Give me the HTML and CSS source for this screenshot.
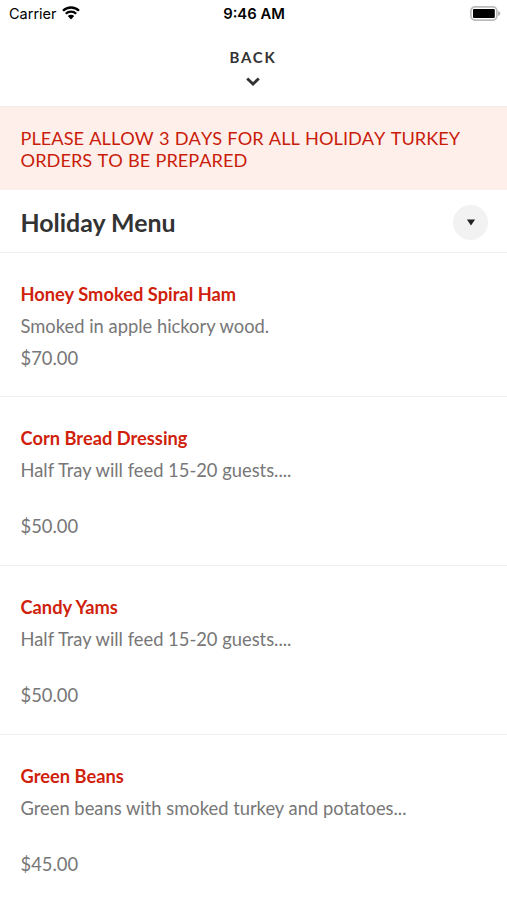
FILE: index.html
```html
<!DOCTYPE html>
<html lang="en">

<head>
  <meta charset="UTF-8">
  <meta name="viewport" content="width=device-width, initial-scale=1.0">
  <title>Holiday Menu</title>
  <link rel="stylesheet" href="styles.css">
</head>

<body>
  <div class="status">
    <div class="status__carrier">
      <span>Carrier</span>
      <svg class="status__wifi" width="18" height="14" viewBox="0 0 18 14">
        <path d="M1 4.8a11.4 11.4 0 0 1 16 0M3.8 7.8a7.4 7.4 0 0 1 10.4 0" fill="none" stroke="#000" stroke-width="2.3"/>
        <path d="M5.8 10.1a4.6 4.6 0 0 1 6.4 0L9 13.4z"/>
      </svg>
    </div>
    <div class="status__time">9:46 AM</div>
    <svg class="status__battery" width="31" height="15" viewBox="0 0 31 15">
      <rect x="0.9" y="0.9" width="26" height="13.2" rx="4" fill="none" stroke="#bcbcbc" stroke-width="1.7"/>
      <rect x="3" y="3" width="21.800" height="9" rx="1"/>
      <path d="M28 5v5a3 3 0 0 0 2.400-2.500a3 3 0 0 0-2.400-2.500z" fill="#b5b5b5"/>
    </svg>
  </div>

  <header class="header">
    <button class="header__back">BACK</button>
    <svg class="header__arrow" width="14" height="9" viewBox="0 0 14 9">
      <path d="M1.2 1.5L7 7l5.800-5.500" fill="none" stroke="#333" stroke-width="2.900"/>
    </svg>
  </header>

  <p class="notice">PLEASE ALLOW 3 DAYS FOR ALL HOLIDAY TURKEY ORDERS TO BE PREPARED</p>

  <div class="category">
    <h1 class="category__title">Holiday Menu</h1>
    <button class="category__toggle">
      <svg width="10" height="7" viewBox="0 0 10 7"><path d="M0.900 0.500h8.200L5 6.500z" fill="#222"/></svg>
    </button>
  </div>

  <ul class="menu">
    <li class="menu__item menu__item--short">
      <h2 class="menu__name">Honey Smoked Spiral Ham</h2>
      <p class="menu__text">Smoked in apple hickory wood.</p>
      <p class="menu__price">$70.00</p>
    </li>
    <li class="menu__item">
      <h2 class="menu__name">Corn Bread Dressing</h2>
      <p class="menu__text">Half Tray will feed 15-20 guests....</p>
      <p class="menu__price">$50.00</p>
    </li>
    <li class="menu__item">
      <h2 class="menu__name">Candy Yams</h2>
      <p class="menu__text">Half Tray will feed 15-20 guests....</p>
      <p class="menu__price">$50.00</p>
    </li>
    <li class="menu__item">
      <h2 class="menu__name">Green Beans</h2>
      <p class="menu__text">Green beans with smoked turkey and potatoes...</p>
      <p class="menu__price">$45.00</p>
    </li>
  </ul>
</body>

</html>
```

FILE: styles.css
```css
* {
  box-sizing: border-box;
}

body {
  margin: 0;
  height: 900px;
  overflow: hidden;
  background-color: #fff;
  color: #333;
  font-family: Lato, sans-serif;
}

h1, h2, p, ul {
  margin: 0;
  padding: 0;
}

button {
  padding: 0;
  border: 0;
  background: none;
  font-family: inherit;
  color: inherit;
}

.status {
  display: grid;
  grid-template-columns: 1fr auto 1fr;
  align-items: center;
  height: 27px;
  padding: 0 6px 0 9px;
  color: #000;
  font-family: Inter, sans-serif;
  font-size: 14.5px;
}

.status__carrier {
  display: flex;
  align-items: center;
  gap: 5px;
}

.status__wifi {
  margin-top: -1px;
}

.status__time {
  margin-right: 2px;
  font-size: 14.8px;
  font-weight: 600;
}

.status__battery {
  justify-self: end;
  margin-top: -1px;
}

.header {
  display: flex;
  flex-direction: column;
  align-items: center;
  height: 80px;
  padding: 20px 1px 0 0;
  border-bottom: 1px solid #f0eeee;
}

.header__back {
  font-size: 15px;
  line-height: 20px;
  font-weight: 700;
  letter-spacing: 1.8px;
}

.header__arrow {
  margin-top: 10px;
}

.notice {
  height: 83px;
  padding: 20px 20.6px;
  background-color: #ffefeb;
  color: #c91c0a;
  font-size: 18.2px;
  line-height: 22px;
  font-kerning: none;
  word-spacing: 0.6px;
}

.category {
  display: flex;
  align-items: center;
  justify-content: space-between;
  height: 63px;
  padding: 2px 19px 0 20.5px;
  border-bottom: 1px solid #efefef;
}

.category__title {
  font-size: 24.9px;
  font-weight: 700;
}

.category__toggle {
  display: flex;
  align-items: center;
  justify-content: center;
  width: 35px;
  height: 35px;
  border-radius: 50%;
  background-color: #f2f2f2;
}

.menu {
  list-style: none;
}

.menu__item {
  height: 168.7px;
  padding: 25px 20.5px 0;
  border-bottom: 1px solid #efefef;
  color: #777;
  font-size: 18.35px;
  line-height: 32px;
}

.menu__item--short {
  height: 144.3px;
}

.menu__item:last-child {
  border-bottom: 0;
}

.menu__name {
  color: #d01f0c;
  font-size: 18.3px;
  font-weight: 700;
}

.menu__price {
  margin-top: 24px;
}

.menu__item--short .menu__price {
  margin-top: 0;
}
```
